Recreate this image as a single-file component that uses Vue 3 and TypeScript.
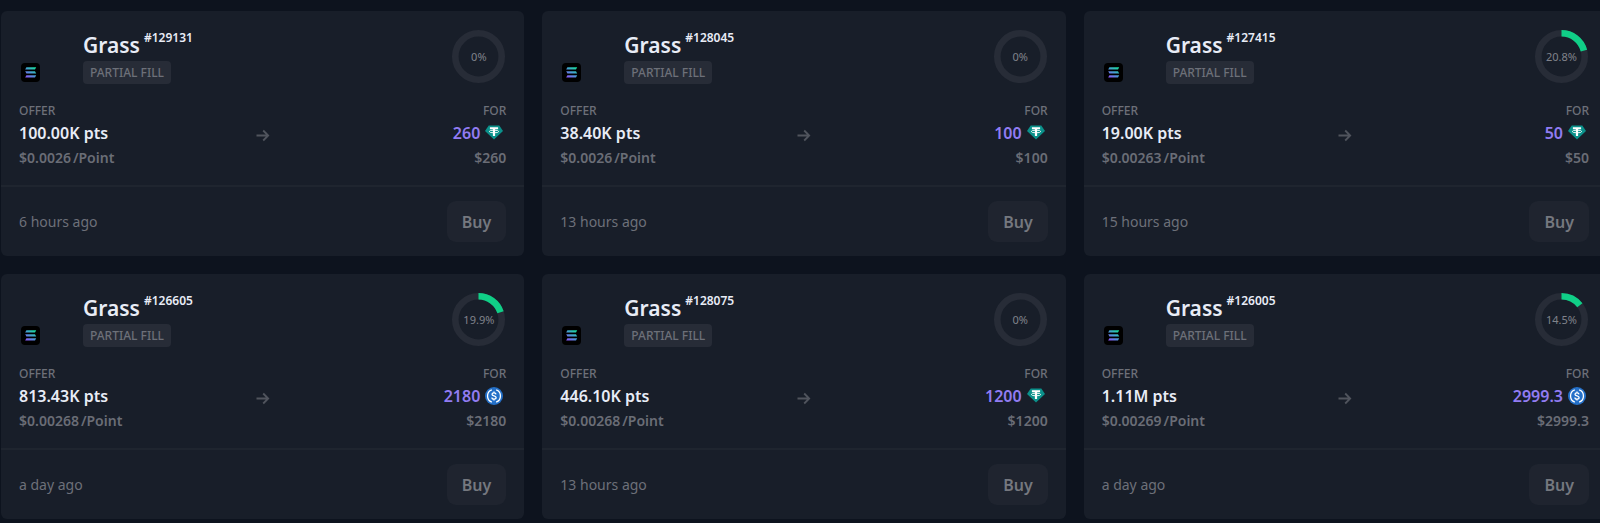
<script setup lang="ts">
type Token = 'usdt' | 'usdc'

interface Offer {
  id: number
  filled: number
  points: string
  rate: string
  price: string
  token: Token
  age: string
}

const offers: Offer[] = [
  { id: 129131, filled: 0, points: '100.00K', rate: '0.0026', price: '260', token: 'usdt', age: '6 hours ago' },
  { id: 128045, filled: 0, points: '38.40K', rate: '0.0026', price: '100', token: 'usdt', age: '13 hours ago' },
  { id: 127415, filled: 20.8, points: '19.00K', rate: '0.00263', price: '50', token: 'usdt', age: '15 hours ago' },
  { id: 126605, filled: 19.9, points: '813.43K', rate: '0.00268', price: '2180', token: 'usdc', age: 'a day ago' },
  { id: 128075, filled: 0, points: '446.10K', rate: '0.00268', price: '1200', token: 'usdt', age: '13 hours ago' },
  { id: 126005, filled: 14.5, points: '1.11M', rate: '0.00269', price: '2999.3', token: 'usdc', age: 'a day ago' },
]
</script>

<template>
  <main class="board">
    <svg class="defs" width="0" height="0" aria-hidden="true">
      <defs>
        <linearGradient id="solana-fill" gradientUnits="userSpaceOnUse" x1="5" y1="15" x2="14" y2="4">
          <stop offset="0" stop-color="#9050fa" />
          <stop offset="0.5" stop-color="#4a98d4" />
          <stop offset="1" stop-color="#14e09a" />
        </linearGradient>
      </defs>
    </svg>

    <article v-for="offer in offers" :key="offer.id" class="card">
      <div class="body">
        <header class="head">
          <div class="avatar">
            <svg class="chain" viewBox="0 0 19 19" role="img" aria-label="Solana">
              <rect width="19" height="19" rx="4" fill="#000" />
              <g fill="url(#solana-fill)">
                <path d="M5.4 4.2h9.8l-1.2 2.3H4.2z" />
                <path d="M4.2 8.2h9.800l1.200 2.300H5.4z" />
                <path d="M5.4 12.2h9.8l-1.2 2.3H4.2z" />
              </g>
            </svg>
          </div>
          <div class="title-block">
            <h2 class="title">Grass<span class="number">#{{ offer.id }}</span></h2>
            <span class="badge">PARTIAL FILL</span>
          </div>
          <div class="ring">
            <svg viewBox="0 0 53 53" aria-hidden="true">
              <circle class="track" cx="26.5" cy="26.5" r="23.2" />
              <circle
                v-if="offer.filled"
                class="progress"
                cx="26.5"
                cy="26.5"
                r="23.2"
                pathLength="100"
                :stroke-dasharray="`${offer.filled} 100`"
                transform="rotate(-90 26.5 26.5)"
              />
            </svg>
            <span class="percent">{{ offer.filled }}%</span>
          </div>
        </header>

        <div class="trade">
          <div class="side">
            <span class="label">OFFER</span>
            <strong class="amount">{{ offer.points }} pts</strong>
            <span class="sub"><span>${{ offer.rate }}</span><span class="unit">/Point</span></span>
          </div>
          <svg class="arrow" viewBox="0 0 14 14" aria-hidden="true">
            <path d="M0.5 6.5h12M7.2 1.5l5 5-5 5" />
          </svg>
          <div class="side right">
            <span class="label">FOR</span>
            <span class="amount price">
              {{ offer.price }}
              <svg v-if="offer.token === 'usdt'" class="token" viewBox="0 0 18 18" role="img" aria-label="USDT">
                <path d="M3.7 1.5h10.6L18 7l-9 8.500L0 7z" fill="#0b918b" />
                <path d="M4.9 3.3h8.200v2h-3V12H7.900V5.300h-3z" fill="#fff" />
                <ellipse cx="9" cy="7.5" rx="4.7" ry="1.3" fill="none" stroke="#fff" stroke-width="0.9" />
              </svg>
              <svg v-else class="token" viewBox="0 0 18 18" role="img" aria-label="USDC">
                <circle cx="9" cy="9" r="9" fill="#2470c8" />
                <g fill="none" stroke="#fff" stroke-width="1.3">
                  <path d="M6.8 2.9a6.5 6.5 0 0 0 0 12.2M11.2 2.9a6.5 6.5 0 0 1 0 12.2" />
                  <path d="M11 7.4C10.9 6.3 10.2 5.8 9 5.8c-1.2 0-2 .6-2 1.5 0 2.3 4.1 1 4.1 3.3 0 1-.9 1.6-2.1 1.6-1.2 0-2.1-.6-2.1-1.7M9 4.4v1.4M9 12.2v1.4" />
                </g>
              </svg>
            </span>
            <span class="sub">${{ offer.price }}</span>
          </div>
        </div>
      </div>

      <footer class="foot">
        <time class="age">{{ offer.age }}</time>
        <button class="buy" type="button">Buy</button>
      </footer>
    </article>
  </main>
</template>

<style>
body {
  background: #0d131e;
  overflow: hidden;
}
</style>

<style scoped>
.board {
  display: grid;
  grid-template-columns: repeat(3, minmax(0, 1fr));
  gap: 18px;
  margin: 0 -7px 0 0;
  padding: 11px 0 4px 1px;
  font-family: "Noto Sans", "Open Sans", sans-serif;
  color: #e8ecf6;
}

.defs {
  position: absolute;
}

.card {
  background: #181e29;
  border-radius: 6px;
}

.body {
  padding: 19px 18px 15px;
  border-bottom: 2px solid #1f252f;
}

.head {
  display: flex;
  align-items: flex-start;
  height: 54px;
  margin-bottom: 17px;
}

.avatar {
  display: flex;
  align-items: flex-end;
  box-sizing: border-box;
  width: 64px;
  height: 54px;
  padding: 0 0 2px 2px;
}

.chain {
  width: 19px;
  height: 19px;
}

.title-block {
  flex: 1;
}

.title {
  display: flex;
  align-items: flex-start;
  gap: 4px;
  margin: 0;
  font-size: 21px;
  font-weight: 600;
  line-height: 31px;
}

.number {
  font-size: 12px;
  line-height: 15px;
}

.badge {
  display: block;
  width: fit-content;
  padding: 0 7px;
  border-radius: 4px;
  background: #272c37;
  color: #6d7079;
  font-size: 12px;
  font-weight: 500;
  line-height: 24px;
  height: 23px;
}

.ring {
  display: grid;
  place-items: center;
  width: 53px;
  height: 53px;
  margin-right: 1px;
}

.ring > * {
  grid-area: 1 / 1;
}

.ring svg {
  width: 53px;
  height: 53px;
}

.track,
.progress {
  fill: none;
  stroke: #272c37;
  stroke-width: 6.6;
}

.progress {
  stroke: #10cf87;
}

.percent {
  color: #80838b;
  font-size: 11px;
}

.trade {
  display: grid;
  grid-template-columns: 1fr 14px 1fr;
  align-items: center;
}

.side {
  display: flex;
  flex-direction: column;
}

.right {
  align-items: flex-end;
}

.label {
  color: #6d7079;
  font-size: 12px;
  font-weight: 500;
  line-height: 19px;
}

.amount {
  font-size: 16px;
  font-weight: 600;
  line-height: 26px;
}

.price {
  display: flex;
  align-items: center;
  gap: 5px;
  padding-right: 3px;
  color: #917cf2;
}

.token {
  width: 18px;
  height: 18px;
}

.sub {
  color: #6a6d76;
  font-size: 14px;
  font-weight: 600;
  line-height: 24px;
}

.unit {
  margin-left: 2px;
}

.arrow {
  width: 14px;
  height: 14px;
  fill: none;
  stroke: #50545d;
  stroke-width: 1.8;
}

.foot {
  display: flex;
  align-items: center;
  justify-content: space-between;
  padding: 14px 18px;
}

.age {
  color: #6d7079;
  font-size: 14px;
}

.buy {
  height: 41px;
  padding: 0 15px;
  border: 0;
  border-radius: 9px;
  background: #1f242f;
  color: #75787f;
  font: inherit;
  font-size: 16px;
  font-weight: 600;
}
</style>
